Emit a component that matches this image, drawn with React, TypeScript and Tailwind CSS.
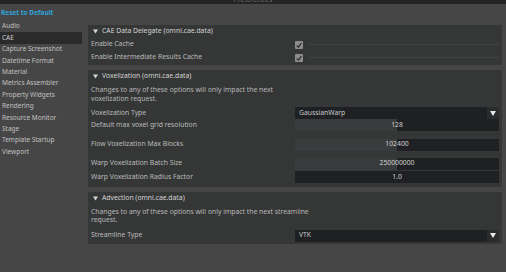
import React from 'react';

const sections = [
  'Audio',
  'CAE',
  'Capture Screenshot',
  'Datetime Format',
  'Material',
  'Metrics Assembler',
  'Property Widgets',
  'Rendering',
  'Resource Monitor',
  'Stage',
  'Template Startup',
  'Viewport',
];

function Caret() {
  return (
    <svg width="5" height="5" viewBox="0 0 10 10" className="shrink-0">
      <path d="M0 1 L10 1 L5 9 Z" fill="#d6d6d6" />
    </svg>
  );
}

function PanelHeader({ title, h }: { title: string; h: string }) {
  return (
    <div className={`flex items-center gap-[4px] pl-[5px] text-[#d4d4d4] ${h}`}>
      <Caret />
      <span>{title}</span>
    </div>
  );
}

function Check() {
  return (
    <div className="w-[8px] h-[8px] rounded-[1px] bg-[#8c8c8c] flex items-center justify-center">
      <svg width="6" height="6" viewBox="0 0 10 10">
        <path d="M1 6 L4 8.5 L9 2" stroke="#2a2a2a" strokeWidth="2" fill="none" />
      </svg>
    </div>
  );
}

function Dropdown({ value }: { value: string }) {
  return (
    <div className="flex-1 h-[12px] bg-[#1f2023] flex items-center">
      <span className="flex-1 pl-[4px] text-[#c9c9c9]">{value}</span>
      <div className="w-[12px] h-full bg-[#2a2b2d] flex items-center justify-center">
        <svg width="6" height="5" viewBox="0 0 12 10">
          <path d="M0 0 L12 0 L6 10 Z" fill="#e8e8e8" />
        </svg>
      </div>
    </div>
  );
}

function NumField({ value, fill }: { value: string; fill?: boolean }) {
  return (
    <div className="relative flex-1 h-[12px] bg-[#1f2023] flex items-center justify-center">
      {fill && <div className="absolute left-0 top-0 h-full w-1/2 bg-[#3a3b3c]" />}
      <span className="relative text-[#d0d0d0]">{value}</span>
    </div>
  );
}

function Row({ label, children, cls = '' }: { label: string; children: React.ReactNode; cls?: string }) {
  return (
    <div className={`flex items-center h-[12px] ${cls}`}>
      <span className="w-[207px] pl-[3px] shrink-0">{label}</span>
      {children}
    </div>
  );
}

export default function App() {
  return (
    <div
      className="w-[506px] h-[272px] overflow-hidden bg-[#464646] text-[6.5px] leading-none text-[#bcbcbc]"
      style={{ fontFamily: '"Noto Sans", "Open Sans", sans-serif' }}
    >
      {/* title bar */}
      <div className="h-[4px] bg-[#232426] overflow-hidden flex justify-center">
        <span className="-mt-[4px] text-[#6a6a6a] text-[7px]">Preferences</span>
      </div>

      <div className="flex">
        {/* sidebar */}
        <div className="w-[82px] shrink-0">
          <div className="h-[12px] mt-[3px] mb-[2px] flex items-center pl-[1px] font-bold text-[#2fa4dc]">
            Reset to Default
          </div>
          {sections.map((s) => (
            <div
              key={s}
              className={`h-[11.4px] flex items-center pl-[2px] ${
                s === 'CAE' ? 'bg-[#2a2a2a] text-[#d0d0d0]' : 'text-[#c0c0c0]'
              }`}
            >
              {s}
            </div>
          ))}
        </div>

        {/* main */}
        <div className="flex-1 pl-[6px] pr-[4px] pt-[21px] flex flex-col gap-[5px] text-[6.8px]">
          <div className="bg-[#353636] rounded-[1px] pb-[1px]">
            <PanelHeader title="CAE Data Delegate (omni.cae.data)" h="h-[13px]" />
            {['Enable Cache', 'Enable Intermediate Results Cache'].map((l) => (
              <div key={l} className="flex items-center h-[13px]">
                <span className="w-[207px] pl-[3px] shrink-0">{l}</span>
                <Check />
                <div className="flex-1 ml-[5px] mr-[2px] h-px bg-[#414242]" />
              </div>
            ))}
          </div>

          <div className="bg-[#353636] rounded-[1px] pb-[3.5px]">
            <PanelHeader title="Voxelization (omni.cae.data)" h="h-[12px]" />
            <div className="pl-[3px] mt-[3px] leading-[9px] text-[#b8b8b8]">
              Changes to any of these options will only impact the next
              <br />
              voxelization request.
            </div>
            <div className="pr-[3px] mt-[4px]">
              <Row label="Voxelization Type">
                <Dropdown value="GaussianWarp" />
              </Row>
              <Row label="Default max voxel grid resolution" cls="mb-[7.5px]">
                <NumField value="128" fill />
              </Row>
              <Row label="Flow Voxelization Max Blocks" cls="mb-[7px]">
                <NumField value="102400" fill />
              </Row>
              <Row label="Warp Voxelization Batch Size" cls="mb-[1.5px]">
                <NumField value="250000000" fill />
              </Row>
              <Row label="Warp Voxelization Radius Factor">
                <NumField value="1.0" />
              </Row>
            </div>
          </div>

          <div className="bg-[#353636] rounded-[1px] pb-[2px]">
            <PanelHeader title="Advection (omni.cae.data)" h="h-[14px]" />
            <div className="pl-[3px] mt-[2px] leading-[8.5px] text-[#b8b8b8]">
              Changes to any of these options will only impact the next streamline
              <br />
              request.
            </div>
            <div className="pr-[3px] mt-[5px]">
              <Row label="Streamline Type">
                <Dropdown value="VTK" />
              </Row>
            </div>
          </div>
        </div>
      </div>
    </div>
  );
}
